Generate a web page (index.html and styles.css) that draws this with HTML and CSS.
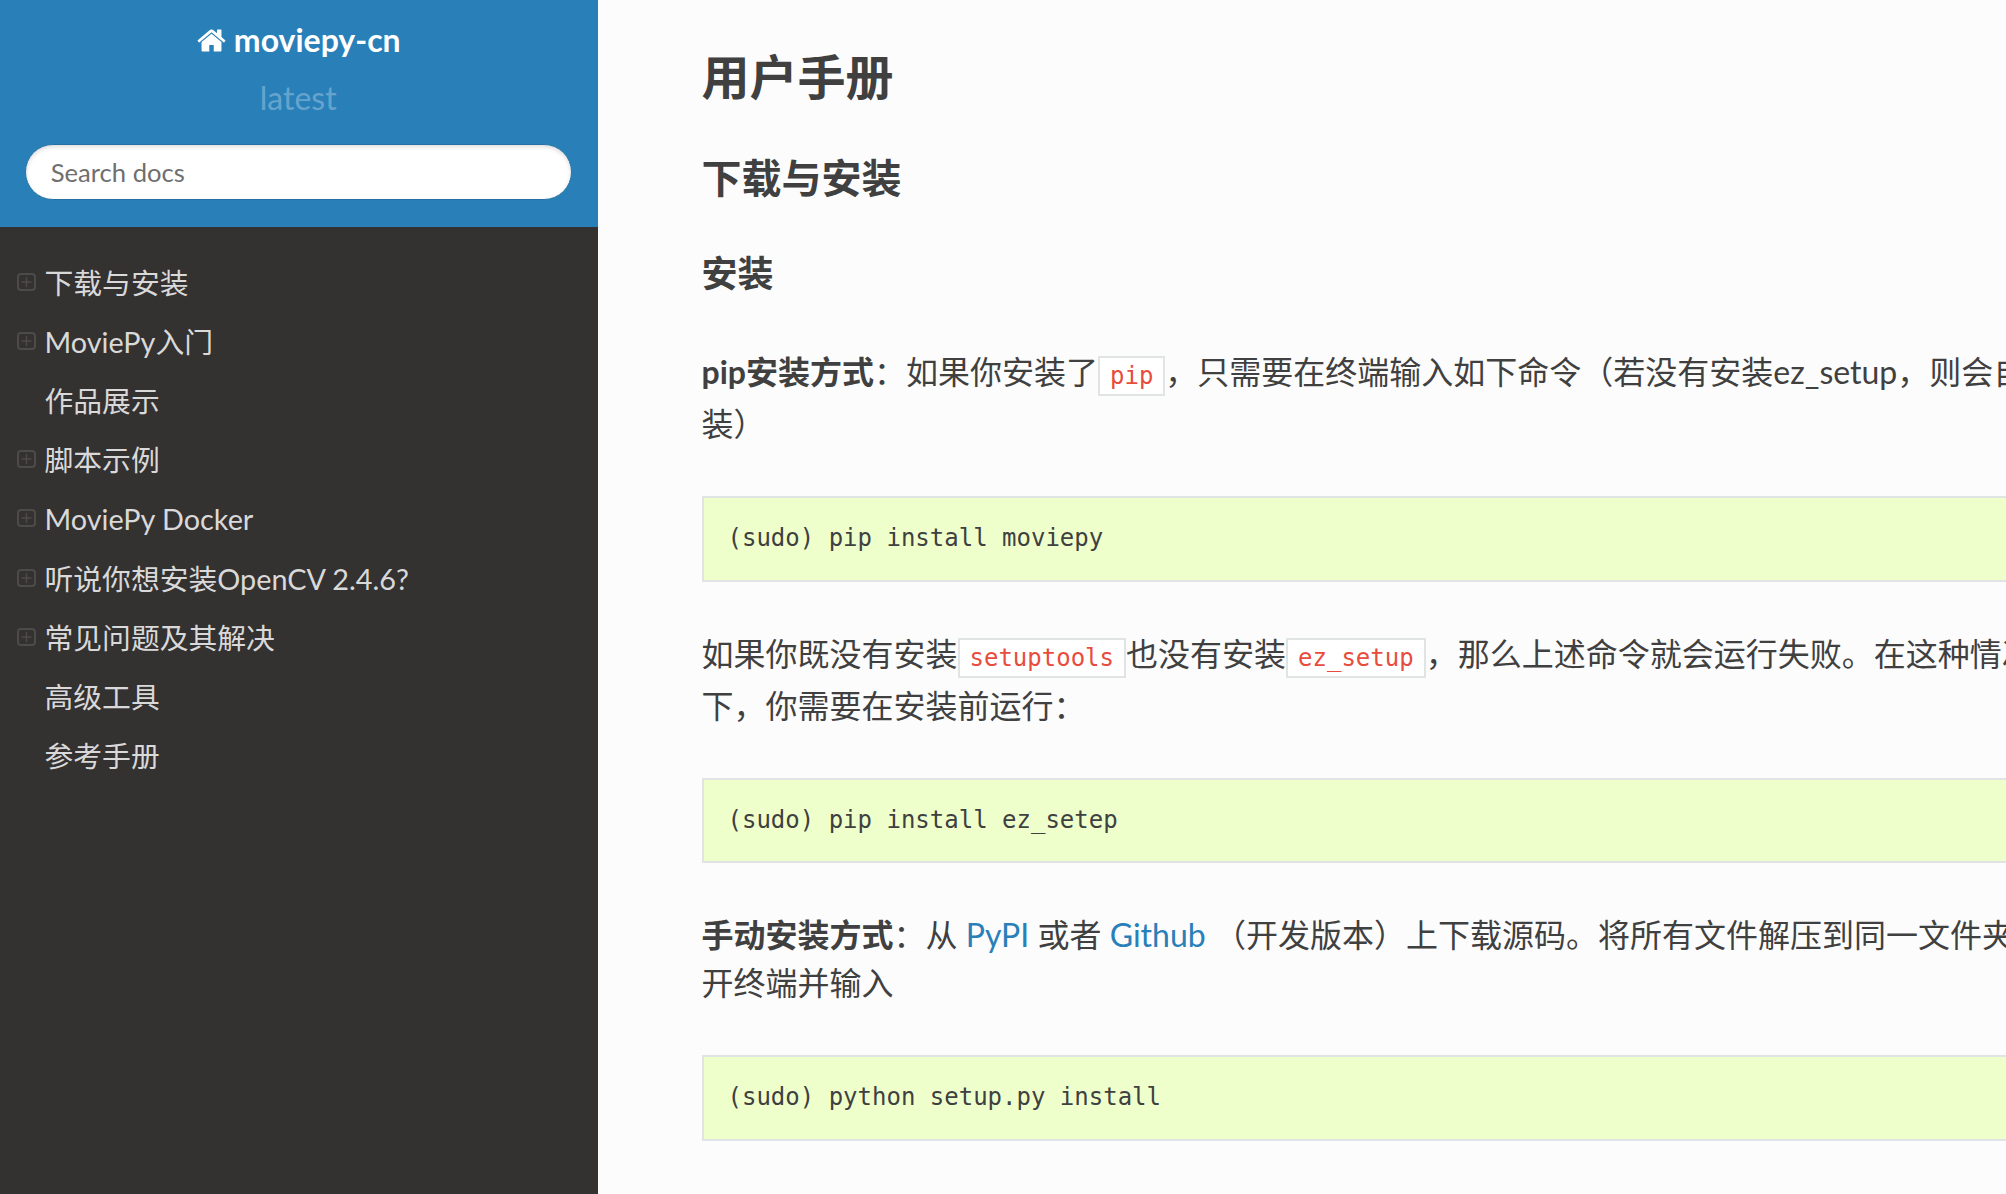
FILE: index.html
```html
<!DOCTYPE html>
<html lang="zh-CN">
<head>
<meta charset="utf-8">
<title>moviepy-cn</title>
<link rel="stylesheet" href="styles.css">
</head>
<body>
<svg class="defs" width="0" height="0" aria-hidden="true">
  <symbol id="plus" viewBox="0 0 19 18">
    <rect x="1" y="1" width="17" height="16" rx="3" fill="none" stroke="currentColor" stroke-width="2"/>
    <path d="M9.5 4v10M4.5 9h10" fill="none" stroke="currentColor" stroke-width="1.5"/>
  </symbol>
</svg>
<div class="page">
  <nav class="sidebar">
    <div class="side-head">
      <a class="title" href="#"><svg class="home" viewBox="0 0 1792 1536" aria-hidden="true"><path transform="translate(0 -128)" d="M1472 992v480q0 26-19 45t-45 19h-384v-384H768v384H384q-26 0-45-19t-19-45V992q0-1 .5-3t.5-3l575-474 575 474q1 2 1 6zm223-69l-62 74q-8 9-21 11h-3q-13 0-21-7L896 424l-692 577q-12 8-24 7-13-2-21-11l-62-74q-8-10-7-23.5T101 878L820 279q32-26 76-26t76 26l244 204V288q0-14 9-23t23-9h192q14 0 23 9t9 23v408l219 182q10 8 11 21.5t-7 23.5z"/></svg>moviepy-cn</a>
      <div class="version">latest</div>
      <input class="search" type="text" placeholder="Search docs">
    </div>
    <ul class="menu">
      <li class="item"><svg class="expand"><use href="#plus"/></svg>下载与安装</li>
      <li class="item"><svg class="expand"><use href="#plus"/></svg>MoviePy入门</li>
      <li class="item">作品展示</li>
      <li class="item"><svg class="expand"><use href="#plus"/></svg>脚本示例</li>
      <li class="item"><svg class="expand"><use href="#plus"/></svg>MoviePy Docker</li>
      <li class="item"><svg class="expand"><use href="#plus"/></svg>听说你想安装OpenCV 2.4.6?</li>
      <li class="item"><svg class="expand"><use href="#plus"/></svg>常见问题及其解决</li>
      <li class="item">高级工具</li>
      <li class="item">参考手册</li>
    </ul>
  </nav>
  <main class="content">
    <h1>用户手册</h1>
    <h2>下载与安装</h2>
    <h3>安装</h3>
    <p><strong>pip安装方式</strong>：如果你安装了<code>pip</code>，只需要在终端输入如下命令（若没有安装ez_setup，则会自动安<br>装）</p>
    <pre>(sudo) pip install moviepy</pre>
    <p>如果你既没有安装<code>setuptools</code>也没有安装<code>ez_setup</code>，那么上述命令就会运行失败。在这种情况<br>下，你需要在安装前运行：</p>
    <pre>(sudo) pip install ez_setep</pre>
    <p><strong>手动安装方式</strong>：从 <a href="#">PyPI</a> 或者 <a href="#">Github</a> （开发版本）上下载源码。将所有文件解压到同一文件夹下，打<br>开终端并输入</p>
    <pre>(sudo) python setup.py install</pre>
  </main>
</div>
</body>
</html>
```
FILE: styles.css
```css
* { box-sizing: border-box; }
html, body { margin: 0; padding: 0; height: 100%; overflow: hidden; }
body {
  font-family: "Lato", "Noto Sans CJK SC", sans-serif;
  font-size: 32px;
  line-height: 48px;
  color: #404040;
  background: #fcfcfc;
}
.defs { position: absolute; }
.page { display: flex; width: 2198px; height: 1194px; }

.sidebar { flex: none; width: 597.5px; height: 100%; background: #343131; }
.side-head {
  height: 227px;
  padding: 16px 1px 0 0;
  background: #2980b9;
  text-align: center;
  display: flex;
  flex-direction: column;
  align-items: center;
}
.title {
  color: #fff;
  font-weight: 700;
  font-size: 32px;
  line-height: 48px;
  text-decoration: none;
  display: flex;
  align-items: center;
}
.home { width: 31px; height: 27px; fill: #fff; margin-right: 7px; }
.version {
  color: rgba(255, 255, 255, 0.3);
  font-size: 32px;
  line-height: 48px;
  margin-top: 10px;
}
.search {
  width: 547px;
  height: 56px;
  margin-top: 22px;
  padding: 8px 25px;
  border: 1px solid #2472a4;
  border-radius: 50px;
  background: #fff;
  box-shadow: inset 0 2px 4px #ddd;
  font-family: inherit;
  font-size: 25.6px;
  color: #404040;
  outline: none;
}
.search::placeholder { color: #6f6f6f; opacity: 1; }

.menu { list-style: none; margin: 26.7px 0 0; padding: 0; }
.item {
  position: relative;
  height: 59.2px;
  padding: 8px 0 8px 44.5px;
  font-size: 28.8px;
  line-height: 43.2px;
  color: #d9d9d9;
}
.expand {
  position: absolute;
  left: 17px;
  top: 19px;
  width: 19px;
  height: 18px;
  color: #4d4a4a;
}

.content { flex: none; width: 1600px; padding: 48px 104px 0; background: #fcfcfc; }
h1, h2, h3 { margin: 0 0 48px; font-weight: 700; }
h1 { font-size: 48px; line-height: 58px; }
h2 { font-size: 40px; line-height: 48px; margin-bottom: 50px; }
h3 { font-size: 36px; line-height: 43px; margin-bottom: 53px; }
p { margin: 0 0 48px; white-space: nowrap; }
a { color: #2980b9; text-decoration: none; }
code {
  display: inline-block;
  margin: 8px 0 4px;
  padding: 4px 10px;
  border: 2px solid #e1e4e5;
  background: #fff;
  color: #e74c3c;
  font-family: "DejaVu Sans Mono", monospace;
  font-size: 24px;
  line-height: 28px;
}
pre {
  margin: 0 0 48px;
  padding: 24px;
  border: 2px solid #e1e4e5;
  background: #eeffcc;
  font-family: "DejaVu Sans Mono", monospace;
  font-size: 24px;
  line-height: 33.6px;
}
```
